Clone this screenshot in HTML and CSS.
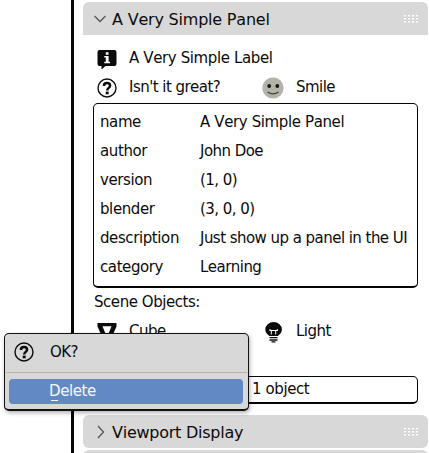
FILE: index.html
```
<!DOCTYPE html>
<html lang="en">
<head>
<meta charset="utf-8">
<title>A Very Simple Panel</title>
<link rel="stylesheet" href="styles.css">
</head>
<body>
<svg class="defs" width="0" height="0">
  <symbol id="question" viewBox="0 0 20 20">
    <circle cx="10" cy="10" r="9" fill="none" stroke="#0b0b0b" stroke-width="1.4"/>
    <path d="M6.900 8C6.900 6 8.100 5.100 10 5.100c1.900 0 3.100 1 3.100 2.600 0 2.200-2.900 2.200-2.900 4.700" fill="none" stroke="#0b0b0b" stroke-width="2.500"/>
    <rect x="8.700" y="13.600" width="3" height="2.700" fill="#0b0b0b"/>
  </symbol>
  <symbol id="grip" viewBox="0 0 15 8">
    <path d="M0 1h15M0 4h15M0 7h15" stroke="#fff" stroke-width="2" stroke-dasharray="2 2"/>
    <path d="M0 2h15M0 5h15M0 8h15" stroke="#b5b4a8" stroke-width=".5" stroke-dasharray="2 2"/>
  </symbol>
</svg>
<div class="screen">
  <main class="properties">
    <header class="panel-header">
      <svg class="chevron" viewBox="0 0 14 14"><path d="M1.500 4l5.500 5.500L12.500 4" fill="none" stroke="#555" stroke-width="1.300"/></svg>
      <h2 class="title">A Very Simple Panel</h2>
      <svg class="grip"><use href="#grip"/></svg>
    </header>
    <section class="panel-body">
      <div class="row">
        <svg class="icon" viewBox="0 0 20 20"><path d="M2.500 1h15a2 2 0 0 1 2 2v12a2 2 0 0 1-2 2H8.500L4.500 20.500V17h-2a2 2 0 0 1-2-2V3a2 2 0 0 1 2-2z" fill="#0b0b0b"/><path d="M8.800 3.300h2.700v2.500H8.800zM7.300 7h4.300v5.700H13v1.500H7.300v-1.500h1.500V8.500H7.300z" fill="#fff"/></svg>
        <span class="wide">A Very Simple Label</span>
      </div>
      <div class="row split">
        <div class="cell"><svg class="icon"><use href="#question"/></svg><span>Isn't it great?</span></div>
        <div class="cell">
          <svg class="icon smile" viewBox="0 0 22 22"><circle cx="11" cy="11" r="10.600" fill="#b3b3a8"/><circle cx="7.200" cy="9" r="1.900" fill="#161616"/><circle cx="15.300" cy="9" r="1.900" fill="#161616"/><path d="M5.500 15q5.500 3.800 11 0" fill="none" stroke="#44443e" stroke-width="1.200"/></svg>
          <span>Smile</span>
        </div>
      </div>
      <dl class="info">
        <dt>name</dt><dd class="wide">A Very Simple Panel</dd>
        <dt>author</dt><dd>John Doe</dd>
        <dt>version</dt><dd>(1, 0)</dd>
        <dt>blender</dt><dd>(3, 0, 0)</dd>
        <dt>description</dt><dd>Just show up a panel in the UI</dd>
        <dt>category</dt><dd>Learning</dd>
      </dl>
      <div class="row heading">Scene Objects:</div>
      <div class="row split">
        <div class="cell"><svg class="icon" viewBox="0 0 20 20"><path d="M.5 1h19v3.500L13 19H7L.5 4.500zM5.500 4.300L10 15.500 14.500 4.300z" fill="#0b0b0b" fill-rule="evenodd"/></svg><span>Cube</span></div>
        <div class="cell">
          <svg class="icon smile" viewBox="0 0 22 22"><path d="M7.500 15Q3.300 12 3.300 8.500a8.300 7.400 0 0 1 16.600 0q0 3.500-4.200 6.500z" fill="#0b0b0b"/><path d="M8 9.500h7.300M9.300 9v4.500M13.700 9v4.500M8 8v2M15.300 8v2" fill="none" stroke="#fff" stroke-width="1"/><path d="M7.500 16.600h8M7.500 19h8M9.500 20.800h4" stroke="#111" stroke-width="1.300"/></svg>
          <span>Light</span>
        </div>
      </div>
      <div class="field">1 object</div>
    </section>
    <header class="panel-header closed">
      <svg class="chevron" viewBox="0 0 14 14"><path d="M5 1l5.500 6L5 13" fill="none" stroke="#555" stroke-width="1.300"/></svg>
      <h2 class="title">Viewport Display</h2>
      <svg class="grip"><use href="#grip"/></svg>
    </header>
    <header class="panel-header next"></header>
  </main>
  <div class="popup">
    <div class="popup-title"><svg class="icon"><use href="#question"/></svg><span>OK?</span></div>
    <div class="menu-item"><span class="key">D</span>elete</div>
  </div>
</div>
</body>
</html>
```
FILE: styles.css
```
* { box-sizing: border-box; }
body { margin: 0; background: #fff; font: 15px/29px "DejaVu Sans", sans-serif; color: #0b0b0b; letter-spacing: -0.54px; font-kerning: none; }
.defs { position: absolute; }
.screen { position: relative; width: 429px; height: 453px; padding-left: 71px; overflow: hidden; }
.properties { height: 453px; border-left: 3px solid #050505; padding: 2px 1px 0 9px; }
.panel-header { display: flex; align-items: center; height: 33px; padding: 0 9px 0 10px; background: #d8d8d8; border-radius: 6px 6px 0 0; }
.chevron { width: 14px; height: 14px; margin-right: 5px; flex: none; }
.title { margin: 0; padding-top: 2px; font-size: 16px; font-weight: 400; letter-spacing: -0.2px; flex: 1; white-space: nowrap; line-height: 33px; }
.grip { width: 15px; height: 8px; }
.panel-body { height: 380px; padding: 9px 10px 0; }
.row { display: flex; align-items: center; height: 29px; white-space: nowrap; }
.split { display: grid; grid-template-columns: 166px 1fr; }
.cell { display: flex; align-items: center; }
.icon { width: 20px; height: 20px; margin: 0 12px 0 4px; flex: none; }
.smile { width: 22px; height: 22px; margin-left: 3px; }
.wide { letter-spacing: -0.38px; }
.info { display: grid; grid-template-columns: 100px 1fr; grid-auto-rows: 29px; height: 185px; margin: 1px 0 0; padding: 4px 6px; border: 1px solid #050505; border-bottom-width: 2px; border-radius: 5px; white-space: nowrap; }
.info dt { letter-spacing: -0.4px; }
.info dd { margin: 0; }
.heading { padding-left: 1px; letter-spacing: -0.45px; }
.field { height: 28px; margin-top: 30px; padding-left: 158px; border: 1px solid #050505; border-bottom-width: 2px; border-radius: 5px; line-height: 25px; letter-spacing: -0.4px; }
.closed { border-radius: 6px; }
.closed .title { padding-top: 1px; letter-spacing: -0.25px; }
.next { margin-top: 2px; border-radius: 6px 6px 0 0; }
.popup { position: absolute; left: 4px; top: 333px; width: 245px; height: 78px; padding: 0 5px; background: #d8d8d8; border: 1px solid #111; border-bottom-width: 2px; border-radius: 5px; box-shadow: 1px 2px 4px rgba(0, 0, 0, .3); }
.popup-title { display: flex; align-items: center; height: 39px; margin: 0 -4px; padding-bottom: 2px; border-bottom: 1px solid #b5b5a5; }
.popup-title .icon { margin: 0 16px 0 8px; }
.menu-item { height: 25px; margin: 6px 0 0 -1px; padding-left: 40px; line-height: 25px; color: #f7f7f7; background: #6389c5; border-radius: 4px; letter-spacing: -0.4px; }
.key { display: inline-block; position: relative; }
.key::after { content: ""; position: absolute; left: 2px; bottom: 3px; width: 7px; height: 1px; background: #f7f7f7; }
```
